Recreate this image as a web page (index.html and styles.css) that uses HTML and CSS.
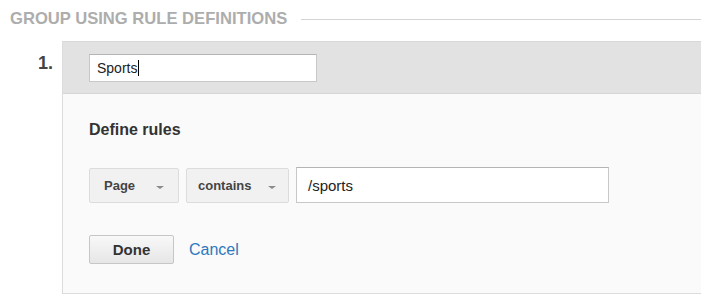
FILE: index.html
```html
<!DOCTYPE html>
<html lang="en">
<head>
    <meta charset="UTF-8">
    <title>Group using rule definitions</title>
    <link rel="stylesheet" href="styles.css">
</head>
<body>
    <!-- Section title -->
    <div class="section-title">
        <span>Group using rule definitions</span>
        <span class="rule-line"></span>
    </div>

    <!-- Group 1 -->
    <div class="group">
        <div class="group-number">1.</div>
        <div class="panel">
            <div class="panel-head">
                <div class="text-field name-field">Sports<span class="caret"></span></div>
            </div>
            <div class="panel-body">
                <div class="rules-title">Define rules</div>
                <div class="rule-row">
                    <div class="dropdown dd-page">Page <span class="arrow"></span></div>
                    <div class="dropdown dd-op">contains <span class="arrow"></span></div>
                    <div class="text-field value-field">/sports</div>
                </div>
                <div class="actions">
                    <button class="done-button">Done</button>
                    <a class="cancel-link" href="#">Cancel</a>
                </div>
            </div>
        </div>
    </div>
</body>
</html>
```

FILE: styles.css
```css
/* Base */
body {
    margin: 0;
    background: #ffffff;
    font-family: 'Liberation Sans', Arial, sans-serif;
    color: #333;
}

/* Section title with line */
.section-title {
    display: flex;
    align-items: center;
    gap: 14px;
    padding: 10px 0 0 10px;
    height: 18px;
    line-height: 18px;
    font-size: 16.6px;
    font-weight: bold;
    text-transform: uppercase;
    color: #adadad;
}

.rule-line {
    flex: 1;
    height: 1px;
    background: #d4d4d4;
}

/* Group row */
.group {
    display: flex;
    margin-top: 13px;
}

.group-number {
    width: 53px;
    text-align: right;
    padding-top: 12px;
    line-height: 21px;
    font-size: 18px;
    font-weight: bold;
    color: #444;
    flex-shrink: 0;
    margin-right: 9px;
}

.panel {
    flex: 1;
    border-left: 1px solid #dcdcdc;
    border-bottom: 1px solid #dcdcdc;
    background: #fafafa;
}

.panel-head {
    background: #e2e2e2;
    border-top: 1px solid #d8d8d8;
    border-bottom: 1px solid #d6d6d6;
    height: 53px;
    padding: 12px 0 0 26px;
    box-sizing: border-box;
}

/* Text inputs */
.text-field {
    background: #fff;
    border: 1px solid #c8c8c8;
    border-top-color: #b4b4b4;
    box-sizing: border-box;
    color: #222;
    display: flex;
    align-items: center;
}

.name-field {
    width: 228px;
    height: 28px;
    padding-left: 7px;
    font-size: 14px;
}

.caret {
    display: inline-block;
    width: 1px;
    height: 16px;
    background: #000;
    margin-left: 1px;
}

.panel-body {
    padding: 27px 0 29px 26px;
}

.rules-title {
    font-size: 16px;
    line-height: 18px;
    font-weight: bold;
    color: #333;
}

.rule-row {
    display: flex;
    gap: 7px;
    margin-top: 29px;
}

.dropdown {
    height: 35px;
    box-sizing: border-box;
    background: #f1f1f1;
    border: 1px solid #dcdcdc;
    border-radius: 2px;
    font-size: 13px;
    font-weight: bold;
    color: #444;
    display: flex;
    align-items: center;
    padding-left: 14px;
}

.dd-page { width: 90px; gap: 21px; }
.dd-op { width: 103px; gap: 17px; padding-left: 11px; }

.arrow {
    width: 0;
    height: 0;
    border-left: 4px solid transparent;
    border-right: 4px solid transparent;
    border-top: 3px solid #8a8a8a;
    margin-top: 3px;
}

.value-field {
    width: 313px;
    height: 36px;
    padding-left: 11px;
    font-size: 15px;
    margin-top: -1px;
}

/* Done / Cancel */
.actions {
    display: flex;
    align-items: center;
    gap: 15px;
    margin-top: 32px;
}

.done-button {
    width: 85px;
    height: 29px;
    border: 1px solid #c6c6c6;
    border-radius: 2px;
    background: linear-gradient(#f8f8f8, #e6e6e6);
    font-family: 'Liberation Sans', Arial, sans-serif;
    font-size: 15px;
    font-weight: bold;
    color: #333;
    padding: 0;
}

.cancel-link {
    font-size: 16px;
    color: #2d78bd;
    text-decoration: none;
}
```
